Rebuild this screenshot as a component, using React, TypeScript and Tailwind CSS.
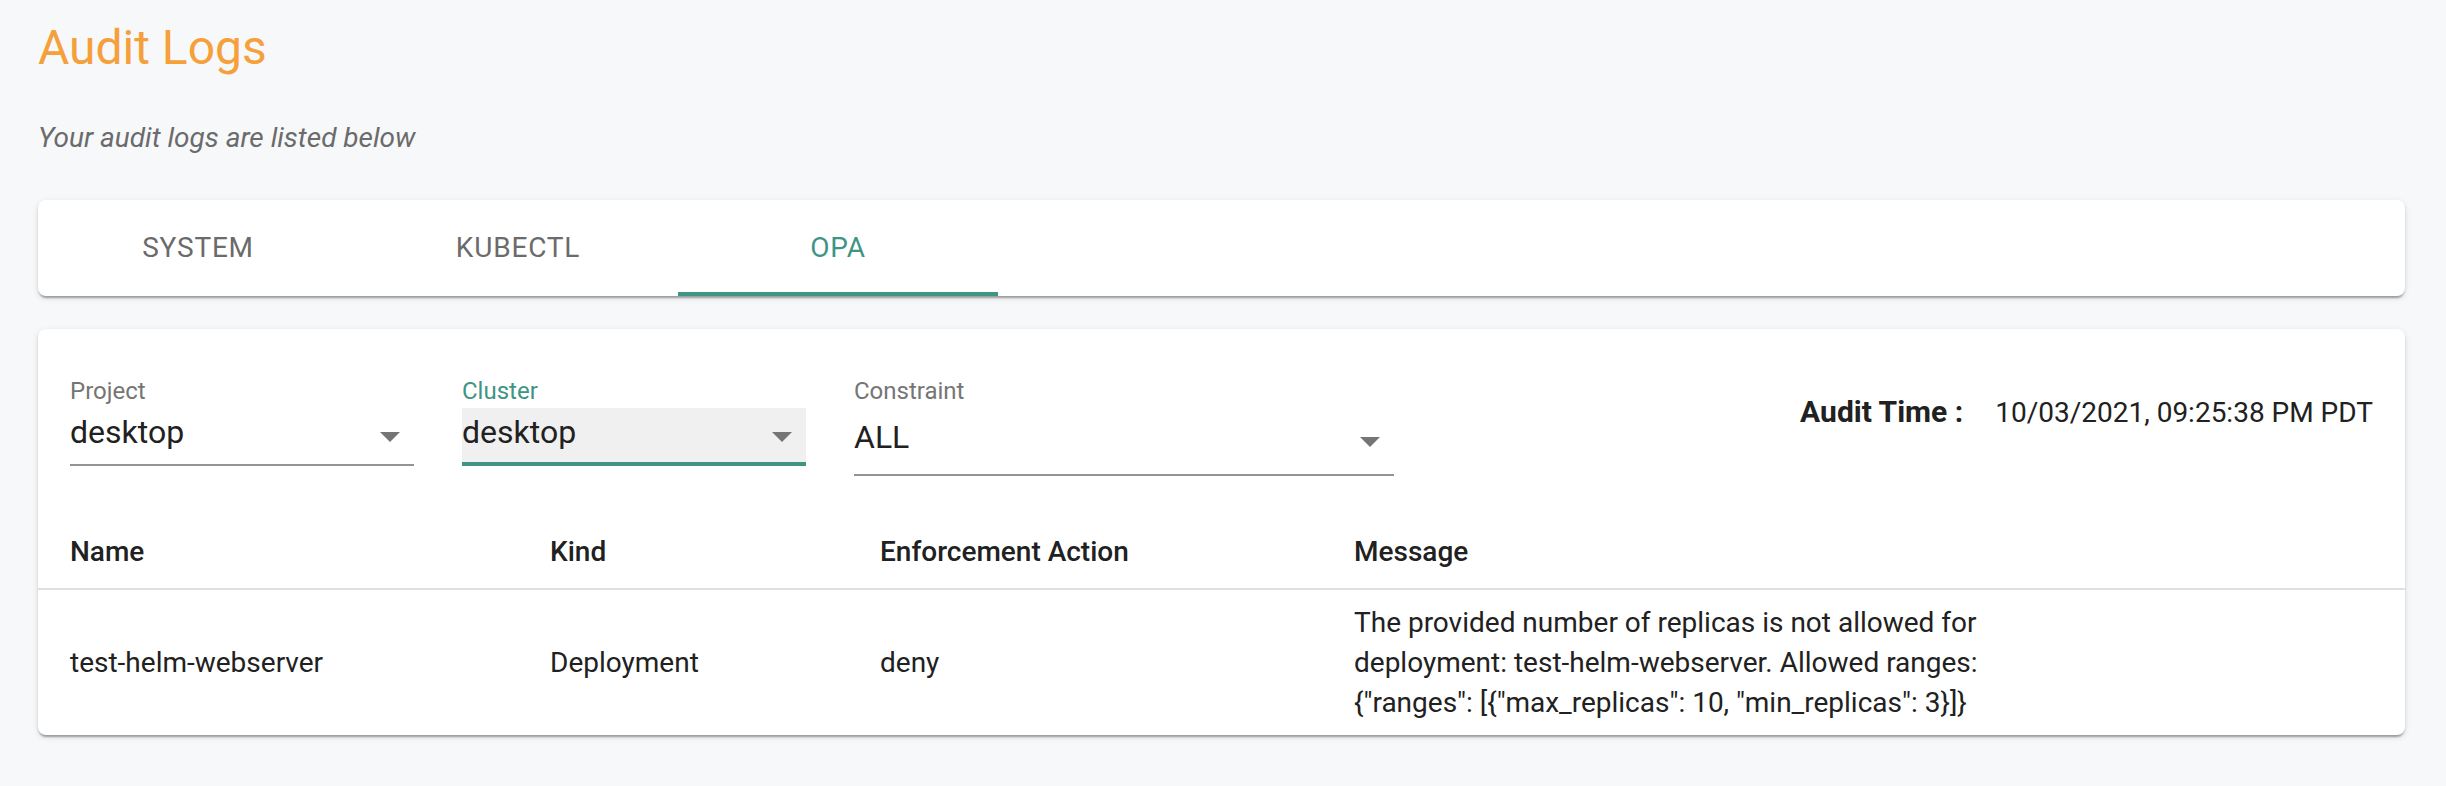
import React from "react";

const cardShadow =
  "shadow-[0_4px_2px_-2px_rgba(0,0,0,0.2),0_2px_2px_0_rgba(0,0,0,0.14),0_2px_6px_0_rgba(0,0,0,0.12)]";

const tabs = ["SYSTEM", "KUBECTL", "OPA"];

const Arrow = ({ top }: { top: string }) => (
  <svg
    className={`absolute right-[14px] ${top} w-[20px] h-[10px]`}
    viewBox="0 0 20 10"
  >
    <polygon points="0,0 20,0 10,10" fill="#757575" />
  </svg>
);

const Select = ({
  label,
  value,
  focused,
}: {
  label: string;
  value: string;
  focused?: boolean;
}) => (
  <div className="flex flex-col w-[344px]">
    <div
      className={`h-[32px] pt-[3px] text-[24px] leading-[24px] ${
        focused ? "text-[#3f9584]" : "text-[#757575]"
      }`}
    >
      {label}
    </div>
    <div
      className={`relative h-[58px] pt-[5px] text-[32px] leading-[38px] text-[#212121] ${
        focused
          ? "bg-[#f0f0f0] border-b-4 border-[#3f9584]"
          : "border-b-2 border-[#949494]"
      }`}
    >
      {value}
      <Arrow top="top-[24px]" />
    </div>
  </div>
);

export default function App() {
  return (
    <div className="min-h-screen bg-[#f7f8fa] pl-[38px] pr-[41px] pt-[16px] font-['Roboto',sans-serif]">
      <h1 className="text-[48px] leading-[64px] text-[#f5a03a] font-normal">
        Audit Logs
      </h1>
      <p className="mt-[37px] text-[28px] leading-[42px] italic text-[#6b6b6b]">
        Your audit logs are listed below
      </p>

      <div className={`mt-[41px] h-[96px] rounded-[8px] bg-white flex ${cardShadow}`}>
        {tabs.map((t) => (
          <div
            key={t}
            className={`relative w-[320px] flex items-center justify-center text-[28px] font-normal tracking-[0.02857em] ${
              t === "OPA" ? "text-[#3f9584]" : "text-[#6b6b6b]"
            }`}
          >
            {t}
            {t === "OPA" && (
              <div className="absolute left-0 right-0 bottom-0 h-[4px] bg-[#3f9584]" />
            )}
          </div>
        ))}
      </div>

      <div className={`mt-[33px] rounded-[8px] bg-white ${cardShadow}`}>
        <div className="flex items-start gap-[48px] px-[32px] pt-[47px]">
          <Select label="Project" value="desktop" />
          <Select label="Cluster" value="desktop" focused />
          <div className="flex flex-col w-[540px]">
            <div className="h-[32px] pt-[3px] text-[24px] leading-[24px] text-[#757575]">
              Constraint
            </div>
            <div className="relative h-[68px] pt-[10px] text-[32px] leading-[38px] text-[#212121] border-b-2 border-[#949494]">
              ALL
              <Arrow top="top-[29px]" />
            </div>
          </div>
          <div className="ml-auto mt-[16px] flex items-baseline leading-[40px] text-[#212121]">
            <span className="font-bold text-[30px]">Audit Time :</span>
            <span className="ml-[32px] text-[28px]">10/03/2021, 09:25:38 PM PDT</span>
          </div>
        </div>

        <div className="mt-[40px] text-[28px] text-[#212121]">
          <div className="grid grid-cols-[480px_330px_474px_1fr] h-[74px] items-center border-b-2 border-[#e0e0e0] font-medium leading-[48px]">
            <div className="pl-[32px]">Name</div>
            <div className="pl-[32px]">Kind</div>
            <div className="pl-[32px]">Enforcement Action</div>
            <div className="pl-[32px]">Message</div>
          </div>
          <div className="grid grid-cols-[480px_330px_474px_1fr] h-[145px] items-center leading-[40px]">
            <div className="pl-[32px]">test-helm-webserver</div>
            <div className="pl-[32px]">Deployment</div>
            <div className="pl-[32px]">deny</div>
            <div className="pl-[32px]">
              <div className="max-w-[700px]">
                The provided number of replicas is not allowed for deployment:
                test-helm-webserver. Allowed ranges: {'{"ranges": [{"max_replicas": 10, "min_replicas": 3}]}'}
              </div>
            </div>
          </div>
        </div>
      </div>
    </div>
  );
}
